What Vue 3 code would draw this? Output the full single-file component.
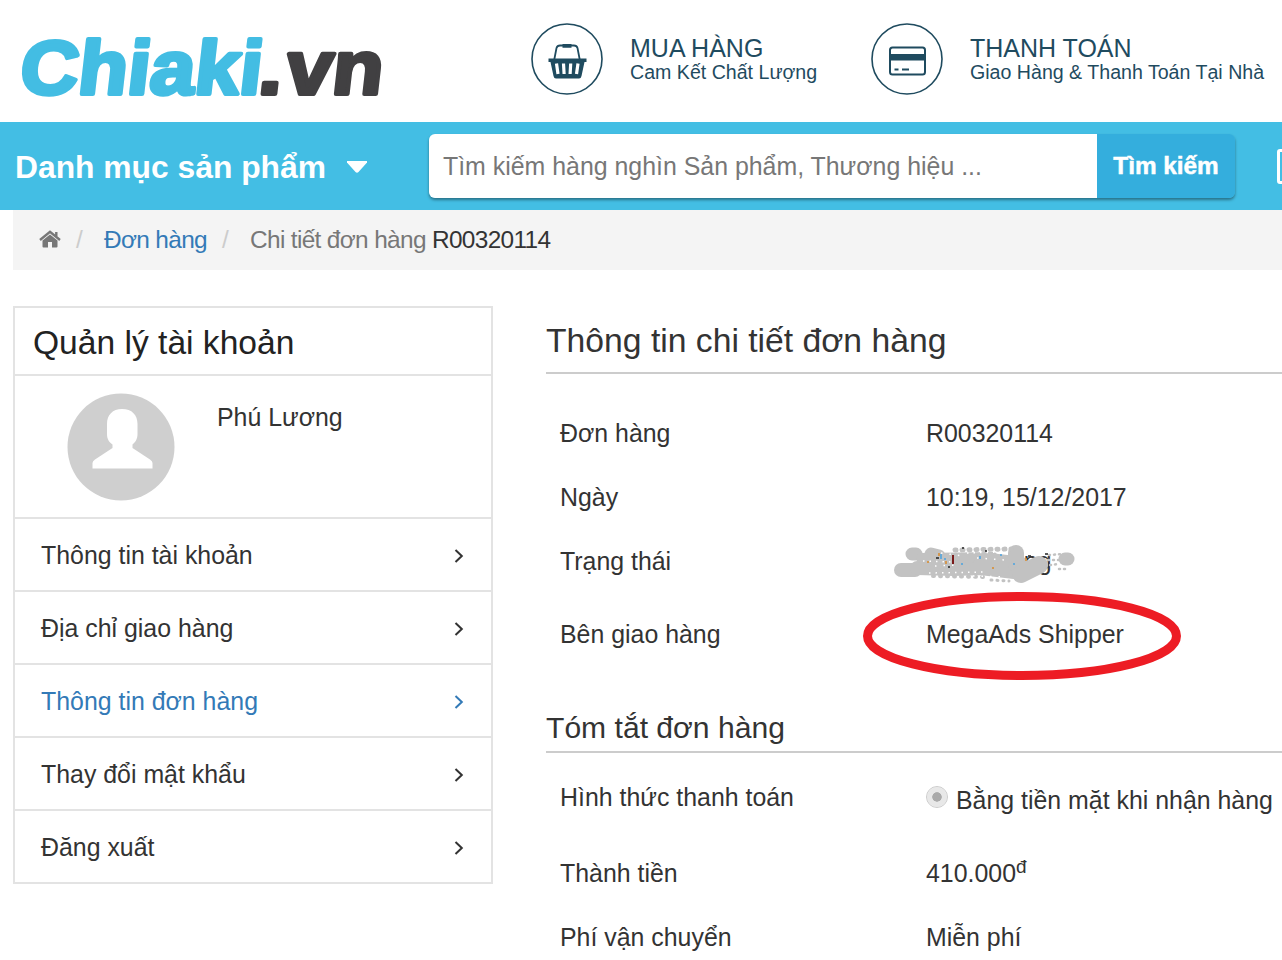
<template>
  <div class="page">
    <header class="header">
      <svg class="logo" viewBox="0 0 370 70" width="370" height="70">
        <g transform="translate(0 59) skewX(-6.5)">
          <text class="logo-main" x="1" y="0" textLength="242" lengthAdjust="spacingAndGlyphs">Chiaki</text>
          <text class="logo-ext" x="240" y="0" textLength="24" lengthAdjust="spacingAndGlyphs">.</text>
          <text class="logo-ext" x="267" y="0" textLength="97" lengthAdjust="spacingAndGlyphs">vn</text>
        </g>
      </svg>
      <div class="perk perk-buy">
        <svg class="perk-icon" viewBox="0 0 72 72" width="72" height="72">
          <circle cx="36" cy="36" r="35" fill="none" stroke="#1f4b5f" stroke-width="1.6" />
          <path d="M23 38 L25.500 25 Q26.300 22.500 29 22.500 H43 Q45.700 22.500 46.500 25 L49 38" fill="none" stroke="#1f4b5f" stroke-width="1.800" />
          <path d="M31.500 21 h9 v3.800 h-9 z M17.500 35.500 H55.500 V39 H53.500 L50.500 53 Q50 55.500 48 55.500 H25 Q23 55.500 22.500 53 L19.500 39 H17.500 Z" fill="#1f4b5f" />
          <path d="M25.500 40.500 l1.500 10.500 M32.500 40.500 l.6 10.500 M39.700 40.500 l-.6 10.500 M47 40.500 l-1.500 10.500" stroke="#fff" stroke-width="3.200" />
        </svg>
        <div class="perk-text">
          <div class="perk-title">MUA HÀNG</div>
          <div class="perk-sub">Cam Kết Chất Lượng</div>
        </div>
      </div>
      <div class="perk perk-pay">
        <svg class="perk-icon" viewBox="0 0 72 72" width="72" height="72">
          <circle cx="36" cy="36" r="35" fill="none" stroke="#1f4b5f" stroke-width="1.6" />
          <rect x="19" y="24.500" width="35" height="27" rx="2.500" fill="none" stroke="#1f4b5f" stroke-width="2" />
          <path d="M19 31 h35 v6.500 h-35 z M23.500 45.500 h4 v2 h-4 z M31 45.500 h7 v2 h-7 z" fill="#1f4b5f" />
        </svg>
        <div class="perk-text">
          <div class="perk-title">THANH TOÁN</div>
          <div class="perk-sub">Giao Hàng &amp; Thanh Toán Tại Nhà</div>
        </div>
      </div>
    </header>

    <nav class="navbar">
      <div class="category">
        <span>Danh mục sản phẩm</span>
        <svg viewBox="0 0 20 12" width="20" height="12"><path d="M0 0 H20 V1.500 L11.500 11 Q10 12.500 8.500 11 L0 1.500 Z" fill="#fff" /></svg>
      </div>
      <div class="search">
        <div class="search-input">Tìm kiếm hàng nghìn Sản phẩm, Thương hiệu ...</div>
        <div class="search-button">Tìm kiếm</div>
      </div>
      <div class="nav-box"></div>
    </nav>

    <div class="breadcrumb">
      <svg class="home" viewBox="0 0 22 18" width="22" height="18">
        <path d="M11 4.500 L18.500 10.500 V16.500 Q18.500 17.500 17.500 17.500 H13 V12 H9 V17.500 H4.500 Q3.500 17.500 3.500 16.500 V10.500 Z" fill="#777" />
        <path d="M1 10 L11 1.800 L21 10 M17.300 2 V6.500" fill="none" stroke="#777" stroke-width="2.400" />
      </svg>
      <span class="slash">/</span>
      <a class="crumb-link">Đơn hàng</a>
      <span class="slash">/</span>
      <span class="crumb-text">Chi tiết đơn hàng <b>R00320114</b></span>
    </div>

    <div class="content">
      <aside class="sidebar">
        <div class="sidebar-title">Quản lý tài khoản</div>
        <div class="profile">
          <svg class="avatar" viewBox="0 0 108 108" width="108" height="108">
            <circle cx="54" cy="54" r="53.500" fill="#cfcfcf" />
            <path d="M55 16 C65 16 70.500 22 70.500 31 V41 C70.500 46 68.500 49 65.500 51.500 V55 L83 66.500 Q85.500 68 85.500 70 V75.500 H25.500 V70 Q25.500 68 28 66.500 L45.500 55 V51.500 C42 49 40 46 40 41 V31 C40 22 45.500 16 55 16 Z" fill="#fff" />
          </svg>
          <span class="profile-name">Phú Lương</span>
        </div>
        <a v-for="item in menu" :key="item.label" class="menu-item" :class="{ active: item.active }">
          <span>{{ item.label }}</span>
          <svg viewBox="0 0 10 14" width="10" height="14"><path d="M1.500 1 L7.800 7 L1.500 13" fill="none" stroke="currentColor" stroke-width="2" /></svg>
        </a>
      </aside>

      <main class="main">
        <h1 class="title">Thông tin chi tiết đơn hàng</h1>
        <dl class="rows info">
          <template v-for="row in info" :key="row.label">
            <dt>{{ row.label }}</dt>
            <dd>{{ row.value }}</dd>
          </template>
          <dt>Trạng thái</dt>
          <dd class="status">
            <span class="status-start">Hu</span><span class="status-end">ng</span>
            <svg class="scribble" viewBox="0 0 184 42" width="184" height="42">
              <g fill="none" stroke="#c2c2c2" stroke-linecap="round">
                <path d="M8 26 H22" stroke-width="14" />
                <path d="M19 10 H23 M38 10 L46 12" stroke-width="13" />
                <path d="M24 24 L60 25 L94 24" stroke-width="14" />
                <path d="M28 14 L100 13" stroke-width="10" />
                <path d="M92 20 L126 24" stroke-width="23" />
                <path d="M123 9 V20" stroke-width="16" />
                <path d="M128 30 L146 21" stroke-width="18" />
                <path d="M172 15 H175" stroke-width="13" />
                <path d="M40 32 L94 33" stroke-width="4" stroke-dasharray="1 6" />
                <path d="M62 6 L118 5" stroke-width="5" stroke-dasharray="1 6" />
                <path d="M98 36 L116 37" stroke-width="3" stroke-dasharray="1 5" />
                <path d="M156 11 L170 10 M155 16 H168 M157 21 L166 20 M166 25 H174" stroke-width="2.500" stroke-dasharray="1 4" />
              </g>
              <!-- gaps left between the spray dots -->
              <g fill="none" stroke="#fff" stroke-width="1.500">
                <path d="M30 17 L60 18 M36 29 L92 28 M74 9 L108 8" stroke-dasharray="1.500 5" />
                <path d="M42 22 L64 21 M84 14 L112 16 M48 9 L70 12 M80 32 L114 33" stroke-dasharray="1.500 7" />
              </g>
              <g fill="none" stroke-width="1.500">
                <path d="M43 14 h3 M55 23 h2 M69 4 h2 M92 7 h2 M135 12 h3 M152 10 h3" stroke="#222" />
                <path d="M46 9 v3 M34 18 h2 M53 17 v3 M99 24 h2 M133 14 v3" stroke="#d98a2b" />
                <path d="M48 10 v5 M52 14 v2 M87 12 v3 M108 10 v2 M120 20 h2 M69 19 v2" stroke="#4aa3e0" />
                <path d="M60 11 v9" stroke="#7a1a1a" stroke-width="2" />
              </g>
            </svg>
          </dd>
          <dt class="shipper">Bên giao hàng</dt>
          <dd class="shipper">
            MegaAds Shipper
            <svg class="ring" viewBox="0 0 320 90" width="320" height="90">
              <ellipse cx="160" cy="45" rx="154.500" ry="39.500" fill="none" stroke="#ed1c24" stroke-width="9" />
            </svg>
          </dd>
        </dl>

        <h2 class="subtitle">Tóm tắt đơn hàng</h2>
        <dl class="rows summary">
          <dt>Hình thức thanh toán</dt>
          <dd class="payment"><i class="radio"></i><span>Bằng tiền mặt khi nhận hàng</span></dd>
          <dt>Thành tiền</dt>
          <dd>410.000<sup>đ</sup></dd>
          <dt>Phí vận chuyển</dt>
          <dd>Miễn phí</dd>
        </dl>
      </main>
    </div>
  </div>
</template>

<script setup>
const menu = [
  { label: 'Thông tin tài khoản' },
  { label: 'Địa chỉ giao hàng' },
  { label: 'Thông tin đơn hàng', active: true },
  { label: 'Thay đổi mật khẩu' },
  { label: 'Đăng xuất' }
]

const info = [
  { label: 'Đơn hàng', value: 'R00320114' },
  { label: 'Ngày', value: '10:19, 15/12/2017' }
]
</script>

<style>
body {
  background: #fff;
  overflow: hidden;
}
</style>

<style scoped>
.page {
  width: 1282px;
  height: 960px;
  overflow: hidden;
  font-family: 'Liberation Sans', Arial, sans-serif;
  font-size: 24.9px;
  line-height: 30px;
  color: #333;
  white-space: nowrap;
}

.header {
  display: flex;
  height: 122px;
  box-sizing: border-box;
  padding: 23px 0 0 17px;
}

.logo {
  margin-top: 12px;
  overflow: visible;
}

.logo-main,
.logo-ext {
  font-size: 76px;
  font-weight: bold;
  fill: #43bde3;
  stroke: #43bde3;
  stroke-width: 4px;
  stroke-linejoin: round;
}

.logo-ext {
  fill: #414042;
  stroke: #414042;
}

.perk {
  display: flex;
  gap: 27px;
  color: #1f4b5f;
}

.perk-buy {
  margin-left: 144px;
  width: 340px;
}

.perk-text {
  padding-top: 13px;
}

.perk-title {
  font-size: 25px;
  line-height: 24px;
}

.perk-sub {
  font-size: 19.6px;
  line-height: 24px;
}

.navbar {
  display: flex;
  height: 88px;
  background: #43bee4;
}

.category {
  display: flex;
  flex: none;
  align-items: center;
  gap: 21px;
  width: 429px;
  box-sizing: border-box;
  padding: 2px 0 0 15px;
  font-size: 31.8px;
  font-weight: bold;
  color: #fff;
}

.search {
  display: flex;
  flex: none;
  width: 806px;
  height: 64px;
  margin-top: 12px;
  line-height: 64px;
  border-radius: 6px;
  box-shadow: 0 2px 3px rgba(0, 0, 0, 0.4);
  overflow: hidden;
}

.search-input {
  width: 654px;
  padding-left: 14px;
  background: #fff;
  color: #777;
}

.search-button {
  flex: 1;
  background: #34aedd;
  color: #fff;
  font-size: 24.3px;
  font-weight: bold;
  text-align: center;
  -webkit-text-stroke: 0.5px #fff;
}

.nav-box {
  flex: none;
  width: 20px;
  height: 29px;
  margin: 27px 0 0 42px;
  border: 3px solid #fff;
  border-radius: 3px;
}

.breadcrumb {
  display: flex;
  height: 60px;
  margin-left: 13px;
  padding-left: 26px;
  box-sizing: border-box;
  align-items: center;
  background: #f4f4f4;
  color: #777;
  font-size: 24.4px;
  letter-spacing: -0.65px;
}

.home {
  margin-top: -2px;
}

.slash {
  width: 7px;
  margin: 0 21px 0 15px;
  color: #ccc;
}

.crumb-link {
  color: #337ab7;
}

.crumb-text b {
  font-weight: normal;
  color: #333;
}

.content {
  display: flex;
  align-items: flex-start;
  padding: 36px 0 0 13px;
}

.sidebar {
  width: 480px;
  box-sizing: border-box;
  border: 2px solid #e3e3e3;
  border-bottom: 0;
}

.sidebar-title {
  height: 66px;
  line-height: 69px;
  padding-left: 18px;
  font-size: 33.6px;
  color: #222;
  border-bottom: 2px solid #e3e3e3;
}

.profile {
  display: flex;
  height: 141px;
  border-bottom: 2px solid #e3e3e3;
}

.avatar {
  margin: 17px 42px 0 52px;
}

.profile-name {
  margin-top: 26px;
}

.menu-item {
  display: flex;
  align-items: center;
  justify-content: space-between;
  height: 71px;
  padding: 0 27px 0 26px;
  border-bottom: 2px solid #e3e3e3;
}

.menu-item svg {
  margin-top: 2px;
}

.menu-item.active {
  color: #337ab7;
}

.main {
  flex: none;
  width: 736px;
  margin-left: 53px;
}

.title {
  height: 66px;
  margin: 0;
  line-height: 69px;
  font-size: 33.7px;
  font-weight: normal;
  border-bottom: 2px solid #ccc;
}

.rows {
  display: grid;
  grid-template-columns: 366px 1fr;
  margin: 0;
  padding-left: 14px;
}

.rows dd {
  margin: 0;
}

.info {
  grid-template-rows: 64px 64px 64px 82px;
  padding-top: 27px;
  line-height: 64px;
}

.status,
.shipper {
  position: relative;
}

.rows .shipper {
  line-height: 82px;
}

.status-end {
  margin-left: 66px;
}

.scribble {
  position: absolute;
  left: -33px;
  top: 15px;
}

.ring {
  position: absolute;
  left: -64px;
  top: -2px;
}

.subtitle {
  height: 50px;
  margin: 0;
  padding-top: 26px;
  line-height: 54px;
  font-size: 30.1px;
  font-weight: normal;
  border-bottom: 2px solid #ccc;
}

.summary {
  grid-template-rows: 88px 64px 64px;
  line-height: 64px;
}

.summary dt:first-child {
  line-height: 89px;
}

.summary .payment {
  display: flex;
  line-height: 95px;
}

.radio {
  width: 10px;
  height: 10px;
  margin: 34px 9px 0 1px;
  border: 5px solid #e8e8e8;
  border-radius: 50%;
  outline: 1px solid #ccc;
  background: #aaa;
  background-clip: padding-box;
}

sup {
  font-size: 19px;
  line-height: 0;
}
</style>
